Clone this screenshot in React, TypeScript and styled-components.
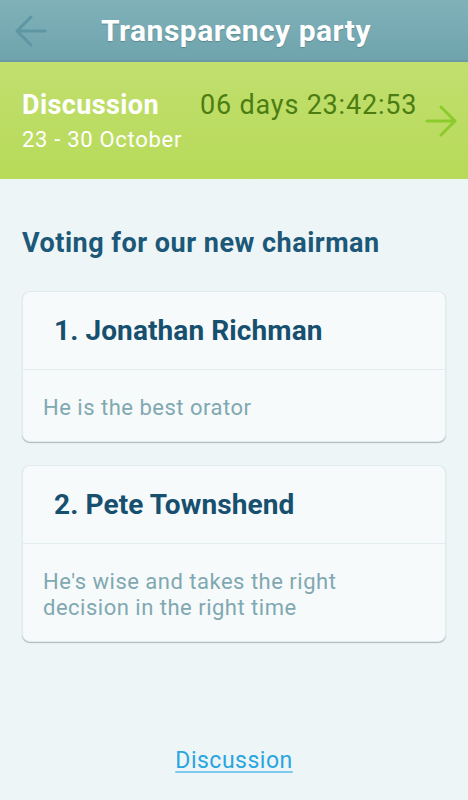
import React, { memo } from 'react'
import styled, { createGlobalStyle } from 'styled-components'

const GlobalStyle = createGlobalStyle`
  html, body {
    margin: 0;
    padding: 0;
    background: #eef5f7;
    font-family: Roboto, 'Liberation Sans', sans-serif;
  }
`

const Page = styled.div`
  width: 468px;
  min-height: 800px;
  display: flex;
  flex-direction: column;
  background: #eef5f7;
`

const TopBar = styled.div`
  height: 62px;
  display: flex;
  align-items: center;
  justify-content: center;
  position: relative;
  background: linear-gradient(#80b1b9, #6fa4ad);
  border-bottom: 2px solid #6a9ba4;
  box-sizing: border-box;
`

const BackButton = styled.div`
  position: absolute;
  left: 14px;
  top: 14px;
  width: 34px;
  height: 34px;
`

const Title = styled.h1`
  margin: 0 0 0 4px;
  font-size: 30px;
  font-weight: 700;
  letter-spacing: 0.5px;
  color: #fff;
  text-shadow: 0 1px 1px rgba(40, 80, 90, 0.35);
`

const Phase = styled.div`
  height: 117px;
  display: flex;
  align-items: flex-start;
  padding: 27px 10px 0 22px;
  box-sizing: border-box;
  white-space: nowrap;
  background: linear-gradient(#c1df6e, #b7da59);
`

const PhaseInfo = styled.div`
  display: flex;
  flex-direction: column;
  flex-shrink: 0;
`

const PhaseName = styled.div`
  font-size: 27px;
  font-weight: 700;
  letter-spacing: 0.4px;
  color: #fff;
  line-height: 32px;
`

const PhaseDates = styled.div`
  margin-top: 4px;
  font-size: 22px;
  letter-spacing: 0.7px;
  color: #fff;
  line-height: 30px;
`

const Countdown = styled.div`
  margin-left: 18px;
  flex-shrink: 0;
  font-size: 27px;
  letter-spacing: 0.8px;
  color: #4c7d12;
  line-height: 32px;
`

const NextButton = styled.div`
  margin-left: auto;
  margin-top: 15px;
  width: 34px;
  height: 34px;
  flex-shrink: 0;
`

const Body = styled.div`
  flex: 1;
  display: flex;
  flex-direction: column;
  padding: 48px 22px 0;
`

const Question = styled.h2`
  margin: 0 0 32px;
  font-size: 27px;
  font-weight: 700;
  letter-spacing: 0.5px;
  color: #1c5877;
  line-height: 32px;
`

const Card = styled.div`
  background: #f6fafb;
  border: 1px solid #e2ecef;
  border-radius: 8px;
  box-shadow: 0 1px 1px rgba(90, 110, 115, 0.45);
  margin-bottom: 23px;
`

const CardHead = styled.div`
  height: 77px;
  display: flex;
  align-items: center;
  padding-left: 31px;
  border-bottom: 1px solid #e3ecef;
  font-size: 28px;
  font-weight: 700;
  letter-spacing: 0.1px;
  color: #17506f;
`

const CardText = styled.div`
  padding: 25px 60px 20px 20px;
  font-size: 22px;
  letter-spacing: 0.5px;
  line-height: 26px;
  color: #80a8b1;
`

const Footer = styled.div`
  margin-top: auto;
  padding-bottom: 26px;
  text-align: center;
`

const FooterLink = styled.a`
  font-size: 23px;
  letter-spacing: 0.5px;
  color: #29a6e0;
  text-decoration: underline;
  text-decoration-color: #7fc8ee;
  text-underline-offset: 3px;
`

const Arrow = ({ color, flip }: { color: string; flip?: boolean }) => (
  <svg width="34" height="34" viewBox="0 0 34 34" fill="none"
    style={flip ? { transform: 'scaleX(-1)' } : undefined}>
    <path d="M17 3 L3 17 L17 31 M3 17 H31" stroke={color} strokeWidth="3" strokeLinecap="round" strokeLinejoin="round" />
  </svg>
)

const candidates = [
  { name: '1. Jonathan Richman', text: 'He is the best orator' },
  { name: '2. Pete Townshend', text: "He's wise and takes the right decision in the right time" },
]

export default memo(function App() {
  return (
    <Page>
      <GlobalStyle />
      <TopBar>
        <BackButton><Arrow color="#5e97a3" /></BackButton>
        <Title>Transparency party</Title>
      </TopBar>
      <Phase>
        <PhaseInfo>
          <PhaseName>Discussion</PhaseName>
          <PhaseDates>23 - 30 October</PhaseDates>
        </PhaseInfo>
        <Countdown>06 days 23:42:53</Countdown>
        <NextButton><Arrow color="#8ccb2b" flip /></NextButton>
      </Phase>
      <Body>
        <Question>Voting for our new chairman</Question>
        {candidates.map((c) => (
          <Card key={c.name}>
            <CardHead>{c.name}</CardHead>
            <CardText>{c.text}</CardText>
          </Card>
        ))}
        <Footer>
          <FooterLink href="#">Discussion</FooterLink>
        </Footer>
      </Body>
    </Page>
  )
})
